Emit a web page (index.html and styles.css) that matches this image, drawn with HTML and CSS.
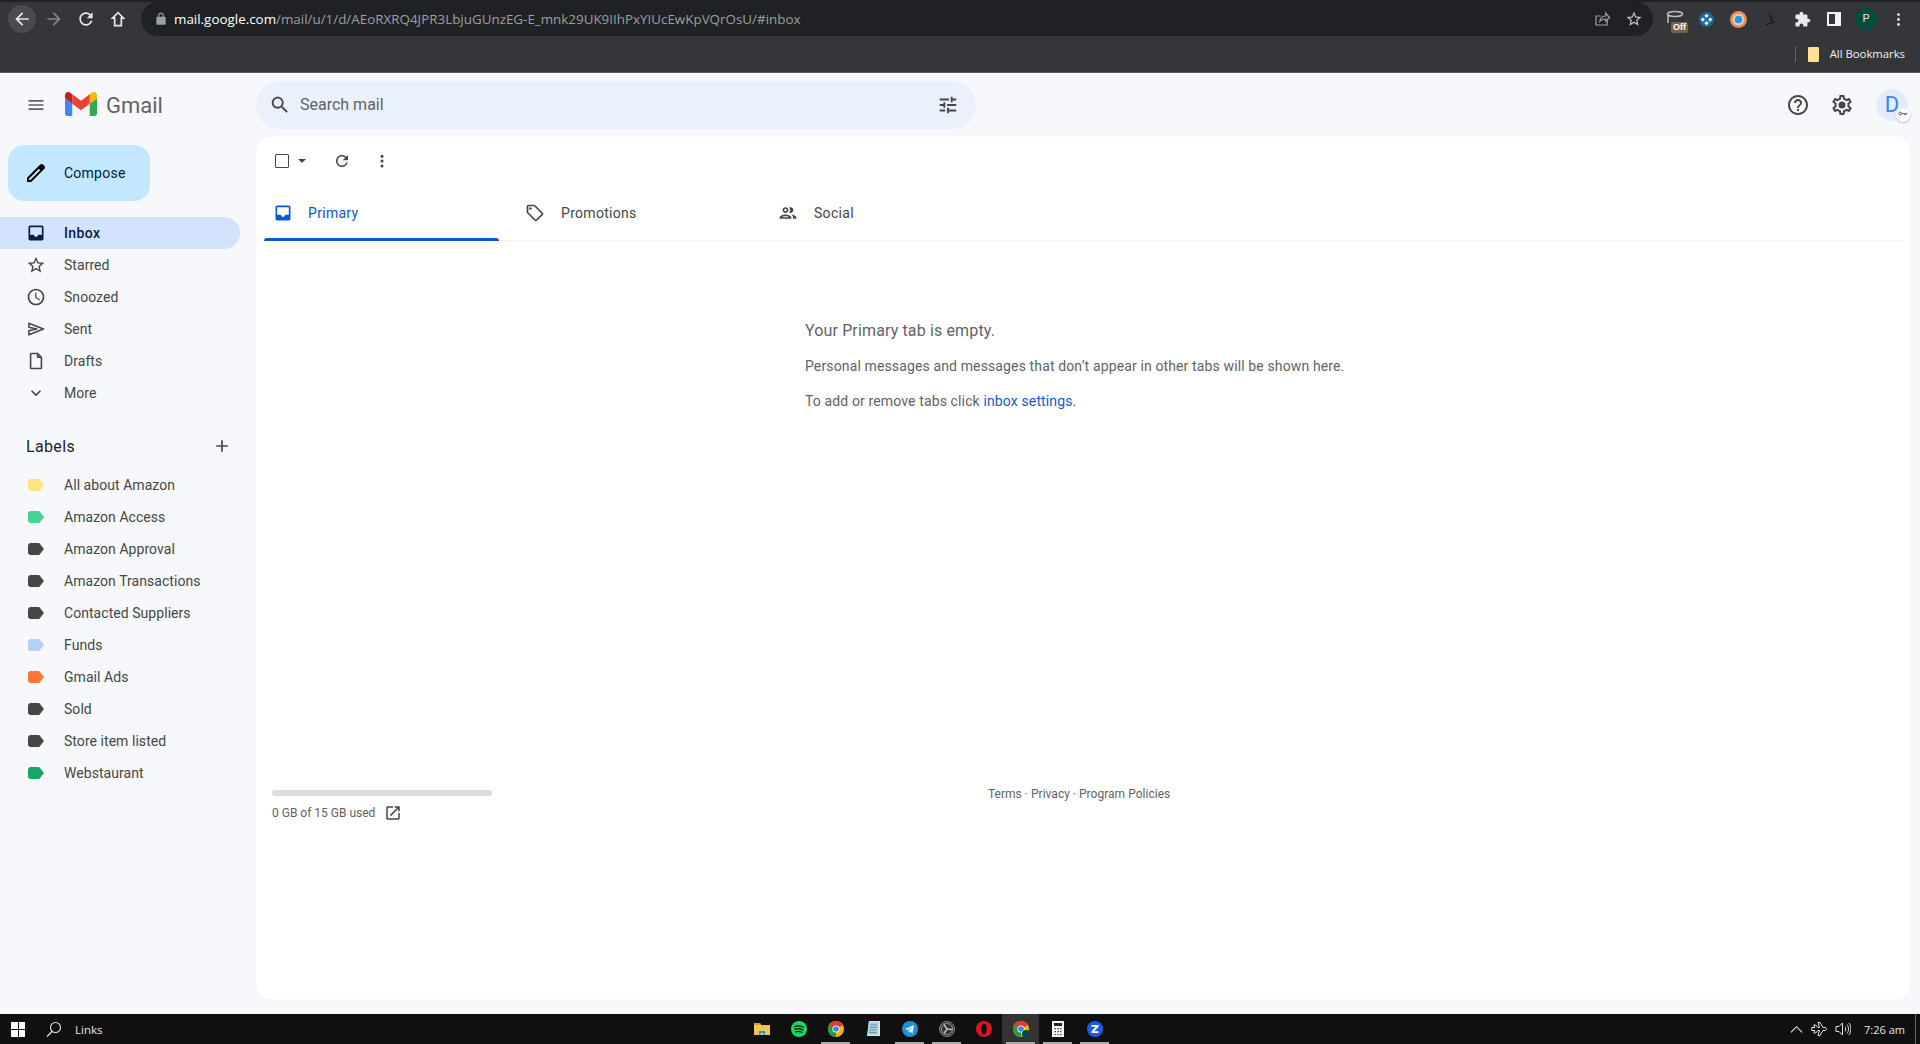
FILE: index.html
```html
<!DOCTYPE html>
<html lang="en">
<head>
	<meta charset="UTF-8">
	<title>Inbox - Gmail</title>
	<link rel="stylesheet" href="styles.css">
</head>
<body>
	<div class="chrome">
		<div class="toolbar">
			<span class="nav nav-back"><svg viewBox="0 0 24 24"><path d="M20 11H7.83l5.59-5.59L12 4l-8 8 8 8 1.41-1.41L7.83 13H20v-2z"/></svg></span>
			<span class="nav nav-off"><svg viewBox="0 0 24 24"><path d="M12 4l-1.41 1.41L16.17 11H4v2h12.17l-5.58 5.59L12 20l8-8z"/></svg></span>
			<span class="nav"><svg viewBox="0 0 24 24"><path d="M17.65 6.35C16.2 4.9 14.21 4 12 4c-4.42 0-7.99 3.58-7.99 8s3.57 8 7.99 8c3.73 0 6.84-2.55 7.73-6h-2.08c-.82 2.33-3.04 4-5.65 4-3.31 0-6-2.69-6-6s2.69-6 6-6c1.66 0 3.14.69 4.22 1.78L13 11h7V4l-2.35 2.35z"/></svg></span>
			<span class="nav"><svg viewBox="0 0 24 24"><path d="M12 3L3 12h4v9h10v-9h4L12 3zm3 16H9v-9H7.8L12 5.8l4.2 4.2H15v9z"/></svg></span>
			<div class="urlbar">
				<svg class="lock" viewBox="0 0 24 24"><path fill-rule="evenodd" d="M18 8h-1V6c0-2.76-2.24-5-5-5S7 3.24 7 6v2H6c-1.1 0-2 .9-2 2v10c0 1.1.9 2 2 2h12c1.1 0 2-.9 2-2V10c0-1.1-.9-2-2-2zM9 6c0-1.66 1.34-3 3-3s3 1.34 3 3v2H9V6z"/></svg>
				<span class="url"><b>mail.google.com</b>/mail/u/1/d/AEoRXRQ4JPR3LbjuGUnzEG-E_mnk29UK9IIhPxYIUcEwKpVQrOsU/#inbox</span>
				<svg class="url-icon url-share" viewBox="0 0 24 24"><path fill="none" stroke="#9aa0a6" stroke-width="1.6" d="M19 14v6H4V8h6M9 15c1-5 5-7 8-7V4l5 6-5 5v-3c-3 0-6 1-8 3z"/></svg>
				<svg class="url-icon" viewBox="0 0 24 24"><path d="M22 9.24l-7.19-.62L12 2 9.19 8.63 2 9.24l5.46 4.73L5.82 21 12 17.27 18.18 21l-1.63-7.03L22 9.24zM12 15.4l-3.76 2.27 1-4.28-3.32-2.88 4.38-.38L12 6.1l1.71 4.04 4.38.38-3.32 2.88 1 4.28L12 15.4z"/></svg>
			</div>
			<div class="extensions">
				<span class="ext ext-off">
					<svg viewBox="0 0 20 20"><ellipse cx="9" cy="5" rx="7.500" ry="2.500" fill="none" stroke="#bdbdbd" stroke-width="1.500"/><path d="M2 6v8" stroke="#bdbdbd" stroke-width="1.500"/></svg>
					<span class="off-badge">Off</span>
				</span>
				<span class="ext"><svg viewBox="0 0 16 16"><circle cx="8" cy="8" r="7" fill="#1a6a9c"/><path d="M8 2.500l2 2-2 2-2-2zM8 9.500l2 2-2 2-2-2zM4.500 6l2 2-2 2-2-2zM11.500 6l2 2-2 2-2-2z" fill="#fff"/></svg></span>
				<span class="ext"><svg viewBox="0 0 16 16"><circle cx="8" cy="8" r="8" fill="#e88d5a"/><circle cx="8" cy="8" r="5.500" fill="#f3c9a8"/><circle cx="8" cy="8" r="3.500" fill="#1e9be8"/></svg></span>
				<span class="ext"><svg viewBox="0 0 16 16"><path d="M7 2l3 9M4 13l8-3" stroke="#111" stroke-width="1" fill="none"/></svg></span>
				<span class="ext"><svg viewBox="0 0 24 24"><path fill="#e8eaed" d="M20.500 11H19V7c0-1.100-.9-2-2-2h-4V3.500C13 2.120 11.880 1 10.500 1S8 2.120 8 3.500V5H4c-1.100 0-1.990.9-1.990 2v3.800H3.500c1.490 0 2.700 1.210 2.700 2.700s-1.210 2.700-2.700 2.700H2V20c0 1.100.9 2 2 2h3.800v-1.500c0-1.490 1.210-2.700 2.700-2.700 1.490 0 2.700 1.210 2.700 2.700V22H17c1.100 0 2-.9 2-2v-4h1.500c1.380 0 2.500-1.120 2.500-2.500S21.880 11 20.500 11z"/></svg></span>
				<span class="ext"><span class="side-panel"></span></span>
				<span class="avatar-p">P</span>
				<span class="ext"><svg viewBox="0 0 24 24"><circle cx="12" cy="5" r="2" fill="#e8eaed"/><circle cx="12" cy="12" r="2" fill="#e8eaed"/><circle cx="12" cy="19" r="2" fill="#e8eaed"/></svg></span>
			</div>
		</div>
		<div class="bookmarks">
			<span class="bm-sep"></span>
			<span class="bm-folder"></span>
			<span class="bm-text">All Bookmarks</span>
		</div>
	</div>

	<div class="gmail">
		<header class="topbar">
			<div class="brand">
				<svg class="icon burger" viewBox="0 0 24 24"><path d="M3 18h18v-2H3v2zm0-5h18v-2H3v2zm0-7v2h18V6H3z"/></svg>
				<svg class="logo" viewBox="52 42 88 66">
					<path fill="#4285f4" d="M58 108h14V74L52 59v43c0 3.320 2.690 6 6 6"/>
					<path fill="#34a853" d="M120 108h14c3.320 0 6-2.690 6-6V59l-20 15"/>
					<path fill="#fbbc04" d="M120 48v26l20-15v-8c0-7.420-8.470-11.650-14.400-7.200"/>
					<path fill="#ea4335" d="M72 74V48l24 18 24-18v26L96 92"/>
					<path fill="#c5221f" d="M52 51v8l20 15V48l-5.600-4.200c-5.940-4.450-14.400-.22-14.400 7.200"/>
				</svg>
				<span class="logo-text">Gmail</span>
			</div>
			<div class="search">
				<svg class="icon" viewBox="0 0 24 24"><path d="M15.500 14h-.79l-.28-.27C15.410 12.590 16 11.110 16 9.500 16 5.910 13.090 3 9.500 3S3 5.910 3 9.500 5.910 16 9.500 16c1.610 0 3.090-.59 4.230-1.570l.27.28v.79l5 4.990L20.490 19l-4.990-5zm-6 0C7.010 14 5 11.990 5 9.500S7.010 5 9.500 5 14 7.010 14 9.500 11.990 14 9.500 14z"/></svg>
				<span class="search-text">Search mail</span>
				<svg class="icon" viewBox="0 0 24 24"><path d="M3 17v2h6v-2H3zM3 5v2h10V5H3zm10 16v-2h8v-2h-8v-2h-2v6h2zM7 9v2H3v2h4v2h2V9H7zm14 4v-2H11v2h10zm-6-4h2V7h4V5h-4V3h-2v6z"/></svg>
			</div>
			<div class="top-actions">
				<svg class="icon" viewBox="0 0 24 24"><path d="M11 18h2v-2h-2v2zm1-16C6.480 2 2 6.480 2 12s4.480 10 10 10 10-4.480 10-10S17.520 2 12 2zm0 18c-4.410 0-8-3.590-8-8s3.590-8 8-8 8 3.590 8 8-3.590 8-8 8zm0-14c-2.210 0-4 1.790-4 4h2c0-1.100.9-2 2-2s2 .9 2 2c0 2-3 1.750-3 5h2c0-2.250 3-2.500 3-5 0-2.210-1.790-4-4-4z"/></svg>
				<svg class="icon" viewBox="0 0 24 24"><path d="M19.430 12.980c.04-.32.07-.64.07-.98 0-.34-.03-.66-.07-.98l2.110-1.650c.19-.15.24-.42.12-.64l-2-3.460c-.09-.16-.26-.25-.44-.25-.06 0-.12.01-.17.03l-2.490 1c-.52-.4-1.080-.73-1.690-.98l-.38-2.650C14.460 2.180 14.250 2 14 2h-4c-.25 0-.46.18-.49.42l-.38 2.650c-.61.25-1.170.59-1.690.98l-2.490-1c-.06-.02-.12-.03-.18-.03-.17 0-.34.09-.43.25l-2 3.460c-.13.22-.07.49.12.64l2.110 1.650c-.04.32-.07.65-.07.98 0 .33.03.66.07.98l-2.110 1.650c-.19.15-.24.42-.12.64l2 3.460c.09.16.26.25.44.25.06 0 .12-.01.17-.03l2.490-1c.52.4 1.080.73 1.690.98l.38 2.650c.03.24.24.42.49.42h4c.25 0 .46-.18.49-.42l.38-2.650c.61-.25 1.170-.59 1.690-.98l2.490 1c.06.02.12.03.18.03.17 0 .34-.09.43-.25l2-3.460c.12-.22.07-.49-.12-.64l-2.110-1.650zm-1.980-1.710c.04.31.05.52.05.73 0 .21-.02.43-.05.73l-.14 1.130.89.7 1.080.84-.7 1.210-1.270-.51-1.040-.42-.9.68c-.43.32-.84.56-1.250.73l-1.060.43-.16 1.130-.2 1.350h-1.400l-.19-1.350-.16-1.130-1.060-.43c-.43-.18-.83-.41-1.230-.71l-.91-.7-1.060.43-1.270.51-.7-1.210 1.080-.84.89-.7-.14-1.130c-.03-.31-.05-.54-.05-.74s.02-.43.05-.73l.14-1.130-.89-.7-1.080-.84.7-1.210 1.270.51 1.040.42.9-.68c.43-.32.84-.56 1.250-.73l1.060-.43.16-1.130.2-1.350h1.390l.19 1.350.16 1.130 1.060.43c.43.18.83.41 1.230.71l.91.7 1.060-.43 1.270-.51.7 1.210-1.070.85-.89.7.14 1.130z"/><circle cx="12" cy="12" r="3.500"/></svg>
				<span class="account">D<span class="key-badge"><svg viewBox="0 0 16 8"><circle cx="3.500" cy="4" r="2.300" fill="none" stroke="#444" stroke-width="1.300"/><path d="M6 3.400h9v1.300h-1.500v2h-1.300v-2h-1.500v2H9.400v-2H6z" fill="#444"/></svg></span></span>
			</div>
		</header>

		<div class="columns">
			<aside class="sidebar">
				<div class="compose">
					<svg viewBox="0 0 24 24"><path d="M20.410 4.940l-1.350-1.350c-.78-.78-2.050-.78-2.830 0L3 16.820V21h4.180L20.410 7.770c.79-.78.79-2.050 0-2.830zm-14 14.120L5 19v-1.360l9.820-9.820 1.410 1.410-9.820 9.830z"/></svg>
					<span>Compose</span>
				</div>

				<ul class="nav-list">
					<li class="on">
						<svg class="icon" viewBox="0 0 24 24"><path fill-rule="evenodd" d="M5 3h14c1.100 0 2 .9 2 2v14c0 1.100-.9 2-2 2H5c-1.100 0-2-.9-2-2V5c0-1.100.9-2 2-2zm0 2v9h4.500c0 1.400 1.100 2.500 2.500 2.500s2.500-1.100 2.500-2.500H19V5H5z"/></svg>
						<span>Inbox</span>
					</li>
					<li>
						<svg class="icon" viewBox="0 0 24 24"><path d="M22 9.240l-7.190-.62L12 2 9.190 8.630 2 9.240l5.460 4.730L5.820 21 12 17.270 18.180 21l-1.630-7.030L22 9.240zM12 15.400l-3.760 2.270 1-4.280-3.320-2.880 4.380-.38L12 6.100l1.710 4.040 4.380.38-3.320 2.880 1 4.280L12 15.400z"/></svg>
						<span>Starred</span>
					</li>
					<li>
						<svg class="icon" viewBox="0 0 24 24"><path d="M11.990 2C6.470 2 2 6.480 2 12s4.470 10 9.990 10C17.520 22 22 17.520 22 12S17.520 2 11.990 2zM12 20c-4.420 0-8-3.580-8-8s3.580-8 8-8 8 3.580 8 8-3.580 8-8 8zm.5-13H11v6l5.250 3.150.75-1.230-4.500-2.670z"/></svg>
						<span>Snoozed</span>
					</li>
					<li>
						<svg class="icon icon-line" viewBox="0 0 24 24"><path d="M3.500 5L21 12 3.500 19v-4.800L13 12 3.500 9.800V5z"/></svg>
						<span>Sent</span>
					</li>
					<li>
						<svg class="icon icon-line" viewBox="0 0 24 24"><path d="M6.500 3H14l4.500 4.500V20c0 .6-.4 1-1 1h-11c-.6 0-1-.4-1-1V4c0-.6.4-1 1-1zM14 3v4.500h4.500"/></svg>
						<span>Drafts</span>
					</li>
					<li>
						<svg class="icon" viewBox="0 0 24 24"><path d="M16.590 8.590L12 13.170 7.410 8.590 6 10l6 6 6-6z"/></svg>
						<span>More</span>
					</li>
				</ul>

				<div class="labels-head">
					<span>Labels</span>
					<svg class="icon" viewBox="0 0 24 24"><path d="M19 13h-6v6h-2v-6H5v-2h6V5h2v6h6v2z"/></svg>
				</div>

				<ul class="nav-list">
					<li><i class="tag tag-yellow"></i><span>All about Amazon</span></li>
					<li><i class="tag tag-mint"></i><span>Amazon Access</span></li>
					<li><i class="tag"></i><span>Amazon Approval</span></li>
					<li><i class="tag"></i><span>Amazon Transactions</span></li>
					<li><i class="tag"></i><span>Contacted Suppliers</span></li>
					<li><i class="tag tag-blue"></i><span>Funds</span></li>
					<li><i class="tag tag-orange"></i><span>Gmail Ads</span></li>
					<li><i class="tag"></i><span>Sold</span></li>
					<li><i class="tag"></i><span>Store item listed</span></li>
					<li><i class="tag tag-green"></i><span>Webstaurant</span></li>
				</ul>
			</aside>

			<main class="card">
				<div class="actions">
					<span class="checkbox"></span>
					<span class="caret"></span>
					<svg class="icon refresh" viewBox="0 0 24 24"><path d="M17.650 6.350C16.200 4.900 14.210 4 12 4c-4.420 0-7.990 3.580-7.990 8s3.570 8 7.990 8c3.730 0 6.840-2.550 7.730-6h-2.080c-.82 2.330-3.040 4-5.650 4-3.310 0-6-2.690-6-6s2.690-6 6-6c1.660 0 3.140.69 4.220 1.780L13 11h7V4l-2.350 2.350z"/></svg>
					<svg class="icon dots" viewBox="0 0 24 24"><circle cx="12" cy="5.500" r="2"/><circle cx="12" cy="12" r="2"/><circle cx="12" cy="18.500" r="2"/></svg>
				</div>

				<div class="tabs">
					<div class="tab tab-on">
						<svg class="icon" viewBox="0 0 24 24"><path fill-rule="evenodd" d="M5 3h14c1.100 0 2 .9 2 2v14c0 1.100-.9 2-2 2H5c-1.100 0-2-.9-2-2V5c0-1.100.9-2 2-2zm0 2v9h4.500c0 1.400 1.100 2.500 2.500 2.500s2.500-1.100 2.500-2.500H19V5H5z"/></svg>
						<span>Primary</span>
					</div>
					<div class="tab">
						<svg class="icon" viewBox="0 0 24 24"><path d="M21.410 11.580l-9-9C12.050 2.220 11.550 2 11 2H4c-1.100 0-2 .9-2 2v7c0 .55.22 1.050.59 1.420l9 9c.36.36.86.58 1.410.58.55 0 1.050-.22 1.410-.59l7-7c.37-.36.59-.86.59-1.410 0-.55-.23-1.060-.59-1.420zM13 20.010L4 11V4h7v-.01l9 9-7 7.020z"/><circle cx="6.500" cy="6.500" r="1.500"/></svg>
						<span>Promotions</span>
					</div>
					<div class="tab">
						<svg class="icon" viewBox="0 0 24 24"><path d="M9 13.750c-2.340 0-7 1.170-7 3.500V19h14v-1.750c0-2.330-4.660-3.500-7-3.500zM4.340 17c.84-.58 2.870-1.250 4.660-1.250s3.820.67 4.660 1.250H4.340zM9 12c1.930 0 3.500-1.570 3.500-3.500S10.930 5 9 5 5.500 6.570 5.500 8.500 7.070 12 9 12zm0-5c.83 0 1.500.67 1.500 1.500S9.830 10 9 10s-1.500-.67-1.500-1.500S8.170 7 9 7zm7.040 6.810c1.160.84 1.960 1.960 1.960 3.440V19h4v-1.750c0-2.020-3.500-3.170-5.960-3.440zM15 12c1.930 0 3.500-1.570 3.500-3.500S16.930 5 15 5c-.54 0-1.040.13-1.500.35.63.89 1 1.980 1 3.150s-.37 2.260-1 3.150c.46.22.96.35 1.500.35z"/></svg>
						<span>Social</span>
					</div>
				</div>

				<div class="empty">
					<h2>Your Primary tab is empty.</h2>
					<p>Personal messages and messages that don’t appear in other tabs will be shown here.</p>
					<p>To add or remove tabs click <a>inbox settings.</a></p>
				</div>

				<div class="foot">
					<div class="storage">
						<div class="storage-bar"></div>
						<div class="storage-text">
							<span>0 GB of 15 GB used</span>
							<svg class="icon" viewBox="0 0 24 24"><path d="M19 19H5V5h7V3H5c-1.110 0-2 .9-2 2v14c0 1.100.89 2 2 2h14c1.100 0 2-.9 2-2v-7h-2v7zM14 3v2h3.590l-9.830 9.830 1.410 1.410L19 6.410V10h2V3h-7z"/></svg>
						</div>
					</div>
					<div class="terms">Terms · Privacy · Program Policies</div>
				</div>
			</main>
		</div>
	</div>

	<footer class="taskbar">
		<div class="task-left">
			<span class="winlogo"><i></i><i></i><i></i><i></i></span>
			<svg class="task-search" viewBox="0 0 16 16"><circle cx="9.500" cy="6.500" r="5" fill="none" stroke="#e6e6e6" stroke-width="1.100"/><path d="M6 10.500L1 15.500" stroke="#e6e6e6" stroke-width="1.200"/></svg>
			<span class="links">Links</span>
		</div>
		<div class="task-apps">
			<span class="app"><svg viewBox="0 0 16 16"><path d="M0 2h6l1 2h9v10H0z" fill="#f3c74e"/><path d="M0 2h6l1 2H0z" fill="#d9a433"/><path d="M5 10h6v4H9.500v-2h-3v2H5z" fill="#2f8fd8"/></svg></span>
			<span class="app"><svg viewBox="0 0 16 16"><circle cx="8" cy="8" r="8" fill="#1ed760"/><path d="M3.500 5.500c3-1 6.500-.7 9 .8M4 8.200c2.500-.8 5.500-.5 7.800.8M4.500 10.800c2-.6 4.500-.4 6.500.7" fill="none" stroke="#111" stroke-width="1.300" stroke-linecap="round"/></svg></span>
			<span class="app"><svg class="chrome-logo" viewBox="0 0 16 16"><use href="#chromeicon"/></svg></span>
			<span class="app"><svg viewBox="0 0 16 16"><path d="M4 0h11v15H2z" fill="#f1e6c8"/><path d="M3.500 1h10v13h-11z" fill="#a9cfe0"/><path d="M5 4h7M5 6.500h7M4.500 9h7M4.500 11.500h7" stroke="#6d93a8"/></svg></span>
			<span class="app"><svg viewBox="0 0 16 16"><circle cx="8" cy="8" r="8" fill="#1c93d2"/><path d="M3 8l9-4-1.500 8.500L8 10.500 6.800 12 6.500 9.500l4-3.500-5 3z" fill="#e6f3fa"/></svg></span>
			<span class="app"><svg viewBox="0 0 16 16"><circle cx="8" cy="8" r="7.500" fill="#303030" stroke="#8a8a8a"/><circle cx="8" cy="8" r="5.500" fill="none" stroke="#9a9a9a"/><path d="M8 8L5 3.500M8 8l5.300.5M8 8l-3 4.500" stroke="#bdbdbd" stroke-width="1.600"/></svg></span>
			<span class="app"><svg viewBox="0 0 16 16"><circle cx="8" cy="8" r="8" fill="#e0141f"/><ellipse cx="8" cy="8" rx="2.800" ry="5.500" fill="#101010"/></svg></span>
			<span class="app app-on"><svg class="chrome-logo" viewBox="0 0 16 16"><use href="#chromeicon"/></svg><i class="app-badge"></i></span>
			<span class="app"><svg viewBox="0 0 12 16"><rect width="12" height="16" fill="#fafafa"/><rect x="2" y="2" width="8" height="3" fill="#222"/><path d="M2.500 7h1.500v1.200H2.500zM5.300 7h1.500v1.200H5.300zM8 7h1.500v1.200H8zM2.500 10h1.500v1.200H2.500zM5.300 10h1.500v1.200H5.300zM8 10h1.500v1.200H8zM2.500 13h1.500v1.200H2.500zM5.300 13h1.500v1.200H5.300zM8 13h1.500v1.200H8z" fill="#444"/></svg></span>
			<span class="app"><svg viewBox="0 0 16 16"><circle cx="8" cy="8" r="8" fill="#1a5cf0"/><path d="M4.500 4h7v1.800L7.300 10.200h4.200V12h-7v-1.800l4.200-4.400H4.500z" fill="#fff"/></svg></span>
		</div>
		<div class="tray">
			<svg class="tray-icon" viewBox="0 0 14 14"><path d="M1 10l6-6 6 6" fill="none" stroke="#e6e6e6" stroke-width="1.200"/></svg>
			<svg class="tray-icon tray-wide" viewBox="0 0 16 16"><path d="M.8 6.500h3L2.800 4h2l2 2.500h1.700L7 1.500h2L12 6.500h2c1 0 1.500.7 1.500 1.500s-.5 1.500-1.500 1.500h-2l-3 5H7l1.500-5H6.800l-2 2.500h-2l1-2.500h-3z" fill="none" stroke="#e6e6e6"/></svg>
			<svg class="tray-icon tray-wide" viewBox="0 0 16 16"><path d="M1 5.500h3L7.500 2v12L4 10.500H1zM10 5.500c1 1.500 1 3.500 0 5M12 3.500c2 2.500 2 6.500 0 9M14 2c2.500 3.500 2.500 8.500 0 12" fill="none" stroke="#e6e6e6"/></svg>
			<span class="clock">7:26 am</span>
			<span class="show-desktop"></span>
		</div>
	</footer>

	<svg class="defs" viewBox="0 0 16 16">
		<symbol id="chromeicon" viewBox="0 0 16 16">
			<circle cx="8" cy="8" r="8" fill="#f2b705"/>
			<path d="M8 8L1.070 4A8 8 0 0 1 14.930 4z" fill="#de3b2f"/>
			<path d="M8 8L1.070 4A8 8 0 0 0 8 16z" fill="#2a9a4a"/>
			<circle cx="8" cy="8" r="3.600" fill="#fff"/>
			<circle cx="8" cy="8" r="2.800" fill="#3f83ef"/>
		</symbol>
	</svg>
</body>
</html>
```
FILE: styles.css
```css
*{
	margin: 0;
	padding: 0;
	box-sizing: border-box;
}
html,body{
	height: 100%;
}
body{
	display: flex;
	flex-direction: column;
	overflow: hidden;
	font-family: Roboto, "Liberation Sans", sans-serif;
	background-color: #f6f8fc;
	color: #444746;
}
ul{
	list-style: none;
}
.defs{
	display: none;
}
.icon{
	width: 20px;
	height: 20px;
	fill: #444746;
	flex: none;
}
.icon-line{
	fill: none;
	stroke: #444746;
	stroke-width: 1.9;
	stroke-linejoin: round;
}

/* browser */
.chrome{
	height: 73px;
	flex: none;
	background-color: #35363a;
	border-bottom: 1px solid #5a5b5f;
}
.toolbar{
	height: 36px;
	padding: 2px 0 0 8px;
	display: flex;
	align-items: center;
	background: linear-gradient(#202124 2px, #35363a 2px);
}
.nav{
	width: 32px;
	height: 32px;
	display: flex;
	align-items: center;
	justify-content: center;
	flex: none;
}
.nav svg{
	width: 20px;
	height: 20px;
	fill: #e8eaed;
}
.nav-back{
	width: 28px;
	height: 28px;
	margin-right: 2px;
	border-radius: 50%;
	background-color: #4a4b4f;
}
.nav-off svg{
	fill: #85878a;
}
.urlbar{
	width: 1512px;
	height: 34px;
	margin-left: 7px;
	padding: 0 10px 0 13px;
	display: flex;
	align-items: center;
	border-radius: 17px;
	background-color: #202124;
	flex: none;
}
.lock{
	width: 14px;
	height: 14px;
	fill: #9aa0a6;
	flex: none;
}
.url{
	flex: 1;
	margin-left: 6px;
	font-family: "Open Sans", sans-serif;
	font-size: 13.4px;
	color: #9aa0a6;
	white-space: nowrap;
}
.url b{
	font-weight: 400;
	color: #fff;
}
.url-icon{
	width: 18px;
	height: 18px;
	fill: #c4c7c5;
	margin-left: 14px;
}
.extensions{
	flex: 1;
	display: flex;
	align-items: center;
	padding-left: 5px;
}
.ext{
	position: relative;
	width: 32px;
	height: 28px;
	display: flex;
	align-items: center;
	justify-content: center;
}
.ext svg{
	width: 17px;
	height: 17px;
}
.ext-off svg{
	width: 20px;
	height: 20px;
	margin-left: 4px;
}
.off-badge{
	position: absolute;
	left: 13px;
	top: 17px;
	padding: 0 2px;
	font-family: "Liberation Sans", sans-serif;
	font-size: 9px;
	line-height: 11px;
	font-weight: 700;
	color: #fff;
	background-color: #7a6248;
	border-radius: 2px;
}
.side-panel{
	width: 14px;
	height: 14px;
	border: 2px solid #f1f3f4;
	border-right-width: 6px;
}
.avatar-p{
	width: 22px;
	height: 22px;
	margin: 0 5px;
	border-radius: 50%;
	background-color: #014d3f;
	color: #e8eaed;
	font-size: 11px;
	line-height: 22px;
	text-align: center;
	flex: none;
}
.bookmarks{
	height: 36px;
	padding-right: 15px;
	display: flex;
	align-items: center;
	justify-content: flex-end;
}
.bm-sep{
	width: 1px;
	height: 16px;
	margin-right: 12px;
	background-color: #5f6368;
}
.bm-folder{
	width: 11px;
	height: 15px;
	margin-right: 11px;
	background-color: #fde293;
	border-radius: 1px;
}
.bm-text{
	padding-bottom: 1px;
	font-family: "Open Sans", sans-serif;
	font-size: 11.3px;
	color: #f1f3f4;
}

/* gmail */
.gmail{
	flex: 1;
	min-height: 0;
	display: flex;
	flex-direction: column;
}
.topbar{
	height: 64px;
	flex: none;
	display: flex;
	align-items: center;
}
.brand{
	width: 256px;
	height: 64px;
	padding-left: 26px;
	display: flex;
	align-items: center;
	flex: none;
}
.burger{
	fill: #5f6368;
}
.logo{
	width: 32px;
	height: 24px;
	margin-left: 19px;
	margin-top: -2px;
}
.logo-text{
	margin-left: 9px;
	font-size: 22px;
	color: #5f6368;
}
.search{
	width: 720px;
	height: 48px;
	padding: 0 17px 0 13px;
	display: flex;
	align-items: center;
	border-radius: 24px;
	background-color: #eaf1fb;
}
.search .icon{
	width: 22px;
	height: 22px;
}
.search-text{
	flex: 1;
	margin-left: 9px;
	padding-bottom: 2px;
	font-size: 16px;
	color: #5f6368;
}
.top-actions{
	margin-left: auto;
	padding-right: 12px;
	display: flex;
	align-items: center;
	gap: 20px;
}
.top-actions .icon{
	width: 24px;
	height: 24px;
}
.account{
	position: relative;
	width: 32px;
	height: 32px;
	margin-left: 2px;
	border-radius: 50%;
	background-color: #e3ecfb;
	color: #4285f4;
	font-size: 22px;
	line-height: 32px;
	text-align: center;
}
.key-badge{
	position: absolute;
	right: -2px;
	bottom: -1px;
	width: 14px;
	height: 14px;
	padding: 3px 2px;
	display: flex;
	border-radius: 50%;
	background-color: #fff;
	box-shadow: 0 1px 2px rgba(0,0,0,.25);
}
.key-badge svg{
	width: 10px;
	height: 5px;
}
.columns{
	flex: 1;
	min-height: 0;
	display: flex;
	padding-bottom: 15px;
}

/* sidebar */
.sidebar{
	width: 256px;
	padding-top: 8px;
	flex: none;
}
.compose{
	width: 142px;
	height: 56px;
	margin-left: 8px;
	padding-left: 16px;
	display: flex;
	align-items: center;
	gap: 16px;
	border-radius: 16px;
	background-color: #c2e7ff;
	font-size: 14px;
	letter-spacing: .25px;
	color: #001d35;
}
.compose svg{
	width: 24px;
	height: 24px;
	flex: none;
}
.nav-list{
	width: 240px;
}
.compose + .nav-list{
	margin-top: 16px;
}
.nav-list li{
	height: 32px;
	padding-left: 26px;
	display: flex;
	align-items: center;
	gap: 18px;
	font-size: 14px;
	letter-spacing: .05px;
	color: #444746;
	border-radius: 0 16px 16px 0;
}
.nav-list .on{
	background-color: #d3e3fd;
	font-weight: 500;
	letter-spacing: .4px;
	color: #041e49;
}
.nav-list .on .icon{
	fill: #041e49;
}
.labels-head{
	height: 40px;
	margin-top: 17px;
	margin-bottom: 3px;
	padding: 0 24px 0 26px;
	display: flex;
	align-items: center;
	justify-content: space-between;
	font-size: 16px;
	letter-spacing: .35px;
	color: #1f1f1f;
}
.tag{
	width: 16px;
	height: 12px;
	margin: 0 2px 0 2px;
	background-color: #444746;
	border-radius: 3px 0 0 3px;
	clip-path: polygon(0 0, 70% 0, 100% 50%, 70% 100%, 0 100%);
	flex: none;
}
.tag-yellow{
	background-color: #fce57e;
}
.tag-mint{
	background-color: #43d692;
}
.tag-blue{
	background-color: #b6cff5;
}
.tag-orange{
	background-color: #ff7537;
}
.tag-green{
	background-color: #16a766;
}

/* main card */
.card{
	flex: 1;
	margin-right: 10px;
	padding: 0 8px;
	display: flex;
	flex-direction: column;
	border-radius: 16px;
	background-color: #fff;
}
.actions{
	height: 48px;
	padding-left: 11px;
	display: flex;
	align-items: center;
}
.checkbox{
	width: 14px;
	height: 14px;
	border: 1.5px solid #444746;
	border-radius: 1px;
}
.caret{
	width: 0;
	height: 0;
	margin-left: 9px;
	border: 4px solid transparent;
	border-top: 4px solid #444746;
	border-bottom: 0;
}
.refresh{
	width: 18px;
	height: 18px;
	margin-left: 27px;
}
.dots{
	margin-left: 22px;
	width: 18px;
	height: 18px;
}
.tabs{
	height: 56px;
	display: flex;
	border-bottom: 1px solid #f1f3f4;
}
.tab{
	position: relative;
	width: 253px;
	height: 56px;
	padding-left: 26px;
	display: flex;
	align-items: center;
	gap: 16px;
	font-size: 14px;
	letter-spacing: .3px;
	color: #444746;
}
.tab-on{
	width: 235px;
	padding-left: 9px;
	gap: 15px;
	color: #0b57d0;
}
.tab-on .icon{
	fill: #0b57d0;
}
.tab-on:after{
	content: "";
	position: absolute;
	left: 0;
	right: 0;
	bottom: 0;
	height: 3px;
	border-radius: 3px 3px 0 0;
	background-color: #0b57d0;
}
.empty{
	padding: 80px 0 0 541px;
	height: 549px;
	font-size: 14px;
	letter-spacing: .13px;
	color: #5f6368;
}
.empty h2{
	margin-bottom: 15px;
	font-size: 16px;
	line-height: 20px;
	font-weight: 400;
	letter-spacing: .14px;
}
.empty p{
	margin-bottom: 15px;
	line-height: 20px;
}
.empty a{
	color: #1a56d6;
}
.foot{
	display: flex;
	padding-left: 8px;
	font-size: 12px;
	color: #5f6368;
}
.storage{
	width: 220px;
}
.storage-bar{
	height: 6px;
	border-radius: 3px;
	background-color: #dadce0;
}
.storage-text{
	margin-top: 8px;
	display: flex;
	align-items: center;
	gap: 9px;
}
.storage-text .icon{
	width: 18px;
	height: 18px;
}
.terms{
	margin-left: 496px;
	margin-top: -3px;
	letter-spacing: .02px;
}

/* windows taskbar */
.taskbar{
	position: relative;
	height: 30px;
	flex: none;
	display: flex;
	align-items: center;
	background-color: #101010;
	color: #e6e6e6;
}
.task-left{
	display: flex;
	align-items: center;
	padding-left: 11px;
	width: 739px;
	flex: none;
}
.winlogo{
	width: 14px;
	height: 15px;
	display: grid;
	grid-template-columns: 1fr 1fr;
	gap: 1px;
}
.winlogo i{
	background-color: #fff;
}
.task-search{
	width: 16px;
	height: 16px;
	margin-left: 21px;
}
.links{
	margin-left: 13px;
	font-family: "Open Sans", sans-serif;
	font-size: 11.5px;
}
.task-apps{
	display: flex;
	padding-left: 4px;
}
.app{
	position: relative;
	width: 37px;
	height: 30px;
	display: flex;
	align-items: center;
	justify-content: center;
	flex: none;
}
.app svg{
	width: 16px;
	height: 16px;
}
.app-on{
	background-color: #333;
}
.app:nth-child(n+3):after{
	content: "";
	position: absolute;
	left: 4px;
	right: 4px;
	bottom: 0;
	height: 2px;
	background-color: #aaa;
}
.app:nth-child(4):after,.app:nth-child(7):after{
	display: none;
}
.app-badge{
	position: absolute;
	right: 9px;
	bottom: 6px;
	width: 8px;
	height: 8px;
	border-radius: 50%;
	background-color: #014d3f;
}
.tray{
	margin-left: auto;
	display: flex;
	align-items: center;
	height: 30px;
}
.tray-icon{
	width: 13px;
	height: 13px;
}
.tray-wide{
	width: 16px;
	height: 16px;
	margin-left: 8px;
}
.clock{
	margin-left: 13px;
	font-family: "Open Sans", sans-serif;
	font-size: 11px;
}
.show-desktop{
	width: 1px;
	height: 30px;
	margin-left: 10px;
	margin-right: 4px;
	background-color: #666;
}
```
